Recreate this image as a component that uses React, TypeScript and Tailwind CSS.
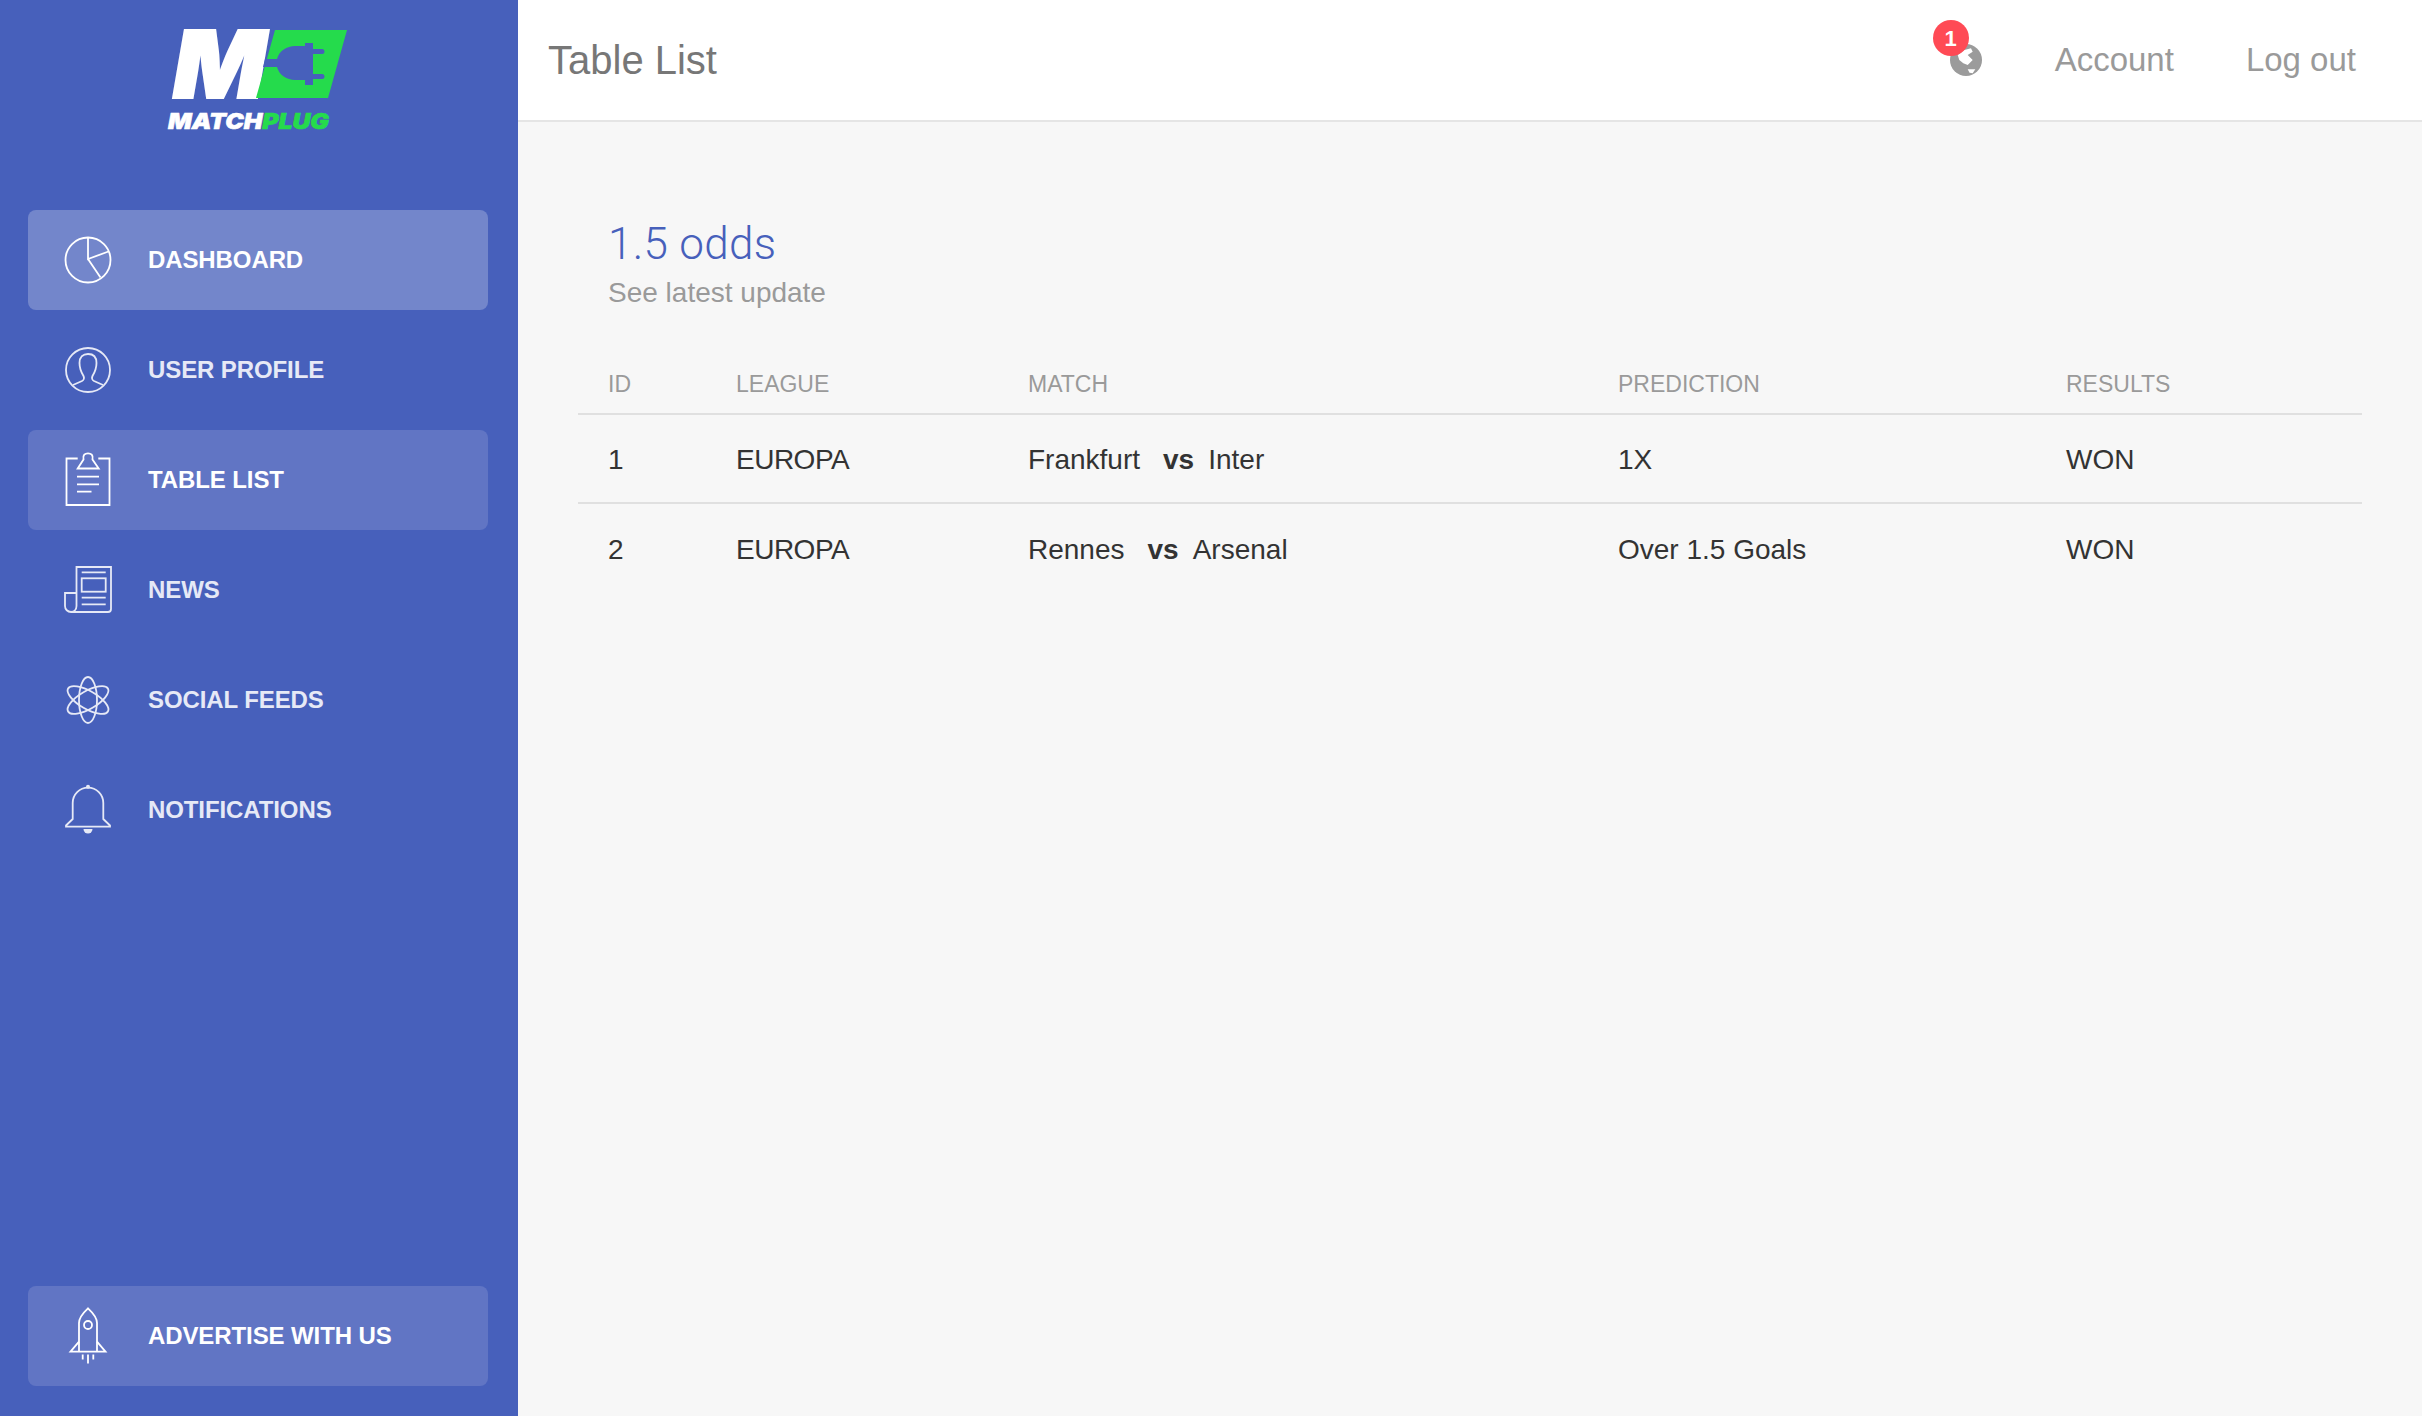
import { ReactNode } from 'react';

const sans = "font-['Liberation_Sans',Arial,sans-serif]";

function Icon({ children }: { children: ReactNode }) {
  return (
    <svg viewBox="0 0 48 48" fill="none" stroke="currentColor" strokeWidth="1.8" className="w-12 h-12 shrink-0 overflow-visible">
      {children}
    </svg>
  );
}

const icons: Record<string, ReactNode> = {
  dashboard: (
    <Icon>
      <circle cx="24" cy="24" r="22.5" />
      <path d="M24 1.5V23L44.5 15.5M24 23L36.5 41.5" />
    </Icon>
  ),
  user: (
    <Icon>
      <circle cx="24" cy="24" r="22" />
      <path d="M9 39L18 35C20 34 20.5 32 19.5 30C17 26 15.5 22 15.5 17C15.5 11 19 8 24 8C29 8 32.5 11 32.5 17C32.5 22 31 26 28.5 30C27.5 32 28 34 30 35L39 39" />
    </Icon>
  ),
  table: (
    <Icon>
      <path d="M13.7 2.5H2.5V49H45.5V2.5H34.3" />
      <path d="M13.7 12.5L19.5 3.5C18.5-1 21-2.7 24-2.7C27-2.7 29.5-1 28.5 3.5L34.7 12.5Z" />
      <path d="M13 20.7H35M13 28.3H35M13 35.7H27.5" />
    </Icon>
  ),
  news: (
    <Icon>
      <path d="M12.5 40V1H47V43A3 3 0 0 1 44 46H7A6 6 0 0 1 1 40V27H12.5V40A6 6 0 0 1 7 46" />
      <path d="M17.7 6.3H41.7M17.7 31.7H41.7M17.7 38.3H41.7" />
      <rect x="17.7" y="12.3" width="24" height="13.4" />
    </Icon>
  ),
  social: (
    <Icon>
      <ellipse cx="24" cy="24" rx="9" ry="23" />
      <ellipse cx="24" cy="24" rx="9" ry="23" transform="rotate(60 24 24)" />
      <ellipse cx="24" cy="24" rx="9" ry="23" transform="rotate(-60 24 24)" />
    </Icon>
  ),
  bell: (
    <Icon>
      <path d="M8.7 33V17A15.3 15.3 0 0 1 39.3 17V33L46 39.5V40.7H2V39.5Z" />
      <circle cx="24" cy="0.7" r="2" fill="currentColor" stroke="none" />
      <path d="M19.5 43H28.5A4.5 4.5 0 0 1 19.5 43Z" fill="currentColor" stroke="none" />
    </Icon>
  ),
  rocket: (
    <Icon>
      <path d="M15 39.7V11C15 5 20 0 24-3.7C28 0 33 5 33 11V39.7" />
      <path d="M15 29.7L6.5 39.7H41.5L33 29.7" />
      <circle cx="24" cy="13" r="4" />
      <path d="M18.7 42.5V47.5M24 42.5V51.5M29.3 42.5V47.5" />
    </Icon>
  ),
};

function NavItem({ icon, label, tone }: { icon: string; label: string; tone?: 'strong' | 'soft' }) {
  const bg = tone === 'strong' ? 'bg-[#7386cb] text-white' : tone === 'soft' ? 'bg-[#6175c4] text-white' : 'text-[#e6e9f6]';
  return (
    <a className={`flex items-center gap-9 h-[100px] pl-9 rounded-lg text-[24px] tracking-[-0.1px] font-bold ${bg}`}>
      {icons[icon]}
      <span>{label}</span>
    </a>
  );
}

function Logo() {
  return (
    <svg viewBox="0 0 200 120" className="w-[200px] h-[120px] block ml-[155px] mt-[20px] overflow-visible">
      {/* logo coords are offset by (155, 20) from the page */}
      <text x="18" y="78" textLength="93" lengthAdjust="spacingAndGlyphs" fill="#fff" stroke="#fff" strokeWidth="2" className="font-['Inter',sans-serif] text-[93px] font-black italic">M</text>
      <path d="M120 10H192L173 78H101Z" fill="#25db4c" />
      <path
        d="M110 39H122C124 31 132 26 140 26H150V23H158V29H167A2.5 2.5 0 0 1 167 34H158V54H167A2.5 2.5 0 0 1 167 59H158V65H150V60H140C132 60 124 55 122 47H108Z"
        fill="#4760bb"
      />
      <text x="13" y="109" textLength="161" lengthAdjust="spacingAndGlyphs" strokeWidth="0.6" className="font-['Inter',sans-serif] text-[22px] font-black italic">
        <tspan fill="#fff" stroke="#fff">MATCH</tspan>
        <tspan fill="#25db4c" stroke="#25db4c">PLUG</tspan>
      </text>
    </svg>
  );
}

function Globe() {
  return (
    <svg viewBox="0 0 32 32" className="w-8 h-8">
      <circle cx="16" cy="16" r="16" fill="#9b9b9b" />
      <path d="M7.7 11L14.3 6L21 4.3L22.7 7.7L17.7 11L22.7 16L17.7 21L13.3 19.3L9.3 16Z" fill="#fff" />
      <path d="M17.7 25.3H25.3L22.7 29.3L19.5 28.8Z" fill="#fff" />
    </svg>
  );
}

const rows = [
  { id: 1, league: 'EUROPA', home: 'Frankfurt', away: 'Inter', prediction: '1X', result: 'WON' },
  { id: 2, league: 'EUROPA', home: 'Rennes', away: 'Arsenal', prediction: 'Over 1.5 Goals', result: 'WON' },
];

export default function App() {
  return (
    <div className={`flex min-h-screen bg-[#f7f7f7] ${sans}`}>
      <aside className="w-[518px] shrink-0 bg-[#4760bb] flex flex-col pl-7 pr-[30px] pb-[30px]">
        <div className="-ml-7 -mr-[30px] h-[210px]">
          <Logo />
        </div>
        <nav className="flex flex-col gap-[10px]">
          <NavItem icon="dashboard" label="DASHBOARD" tone="strong" />
          <NavItem icon="user" label="USER PROFILE" />
          <NavItem icon="table" label="TABLE LIST" tone="soft" />
          <NavItem icon="news" label="NEWS" />
          <NavItem icon="social" label="SOCIAL FEEDS" />
          <NavItem icon="bell" label="NOTIFICATIONS" />
        </nav>
        <div className="mt-auto">
          <NavItem icon="rocket" label="ADVERTISE WITH US" tone="soft" />
        </div>
      </aside>

      <main className="flex-1 min-w-0">
        <header className="h-[122px] bg-white border-b-2 border-[#e5e5e5] flex items-center pl-[30px] pr-[66px]">
          <h1 className="text-[40px] text-[#777]">Table List</h1>
          <div className="ml-auto flex items-center text-[33px] text-[#9a9a9a]">
            <div className="relative w-8 h-8 mr-[73px]">
              <Globe />
              <span className="absolute -left-[17px] -top-[24px] w-9 h-9 rounded-full bg-[#ff4a55] text-white text-[22px] font-bold flex items-center justify-center">1</span>
            </div>
            <a>Account</a>
            <a className="ml-[72px]">Log out</a>
          </div>
        </header>

        <section className="px-[60px] pt-[98px]">
          <div className="px-[30px]">
            <h4 className="text-[44px] tracking-[0.3px] leading-[48px] text-[#4760bb] font-['Roboto',sans-serif] font-light">1.5 odds</h4>
            <p className="mt-2 text-[28px] leading-[34px] text-[#9a9a9a]">See latest update</p>
          </div>
          <table className="w-full mt-[44px] table-fixed text-left">
            <thead>
              <tr className="border-b-2 border-[#e0e0e0] text-[23px] text-[#9a9a9a] h-[60px]">
                <th className="w-[128px] pl-[30px] pt-[2px] font-normal">ID</th>
                <th className="w-[292px] pl-[30px] pt-[2px] font-normal">LEAGUE</th>
                <th className="w-[590px] pl-[30px] pt-[2px] font-normal">MATCH</th>
                <th className="w-[448px] pl-[30px] pt-[2px] font-normal">PREDICTION</th>
                <th className="pl-[30px] pt-[2px] font-normal">RESULTS</th>
              </tr>
            </thead>
            <tbody className="text-[28px] text-[#333]">
              {rows.map((r, i) => (
                <tr key={r.id} className={i === 0 ? 'h-[89px] border-b-2 border-[#e0e0e0]' : 'h-[90px]'}>
                  <td className="pl-[30px] pt-[2px]">{r.id}</td>
                  <td className="pl-[30px] pt-[2px] tracking-[-0.5px]">{r.league}</td>
                  <td className="pl-[30px] pt-[2px]">
                    {r.home}
                    <b className="ml-[23px] mr-[14px]">vs</b>
                    {r.away}
                  </td>
                  <td className="pl-[30px] pt-[2px]">{r.prediction}</td>
                  <td className="pl-[30px] pt-[2px]">{r.result}</td>
                </tr>
              ))}
            </tbody>
          </table>
        </section>
      </main>
    </div>
  );
}
